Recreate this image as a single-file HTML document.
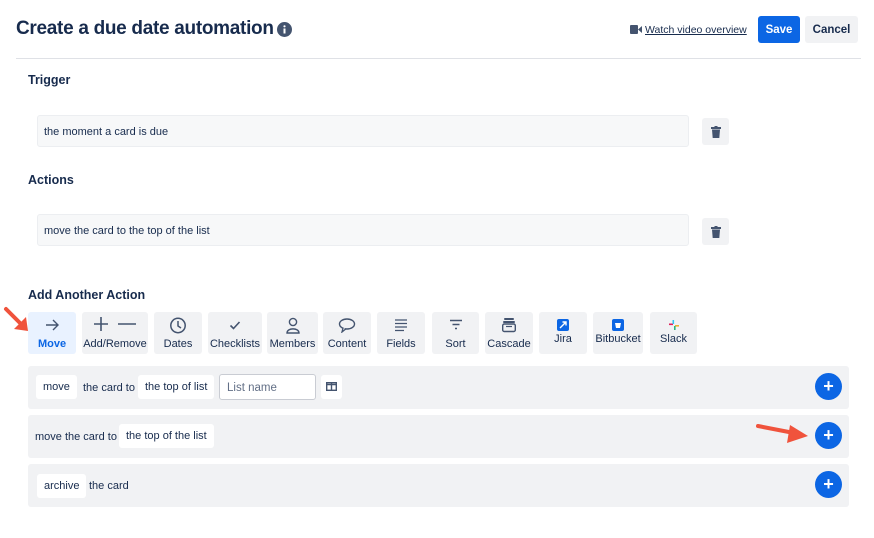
<!DOCTYPE html>
<html><head><meta charset="utf-8"><style>
*{box-sizing:border-box;margin:0;padding:0}
body{width:874px;height:538px;background:#fff;font-family:"Liberation Sans",sans-serif;color:#172b4d;position:relative;overflow:hidden}
.a{position:absolute}
h1{position:absolute;left:16px;top:18px;font-size:19px;font-weight:bold;color:#172b4d;letter-spacing:-0.3px;white-space:nowrap}
.h{font-size:12.5px;font-weight:bold}
.box{background:#f7f8f9;border:1px solid #eceef1;border-radius:3px;font-size:11px;padding-left:6px;padding-top:1px;display:flex;align-items:center}
.trash{background:#f1f2f4;border-radius:3px;display:flex;align-items:center;justify-content:center}
.btn{position:absolute;top:312px;height:42px;background:#f1f2f4;border-radius:3px;font-size:11px;color:#172b4d;text-align:center;white-space:nowrap}
.btn svg{position:absolute;left:50%;top:5px;transform:translateX(-50%)}
.btn span{position:absolute;left:0;right:0;top:26px}
.row{position:absolute;left:28px;width:821px;height:43px;background:#f1f2f4;border-radius:3px}
.chip{position:absolute;background:#fff;border-radius:3px;font-size:11px;height:24px;line-height:25px;padding:0 7px;white-space:nowrap}
.t{position:absolute;font-size:11px;white-space:nowrap}
.plus{position:absolute;left:787px;width:27px;height:27px;border-radius:50%;background:#0c66e4;color:#fff;font-weight:bold;font-size:18px;line-height:26px;text-align:center}
</style></head><body>
<h1>Create a due date automation</h1>
<svg class="a" style="left:277px;top:22px" width="15" height="15"><circle cx="7.5" cy="7.5" r="7.5" fill="#44546f"/><rect x="6.5" y="6.5" width="2" height="5" fill="#fff"/><circle cx="7.5" cy="4.3" r="1.1" fill="#fff"/></svg>
<svg class="a" style="left:630px;top:25px" width="12" height="9"><rect x="0" y="0" width="8" height="9" rx="1" fill="#44546f"/><path d="M8 4.5 L12 1 V8 Z" fill="#44546f"/></svg>
<div class="a" style="left:645px;top:24px;font-size:10.5px;text-decoration:underline;color:#172b4d">Watch video overview</div>
<div class="a" style="left:758px;top:16px;width:42px;height:27px;background:#0c66e4;border-radius:3px;color:#fff;font-weight:bold;font-size:11.5px;line-height:28px;text-align:center">Save</div>
<div class="a" style="left:805px;top:16px;width:53px;height:27px;background:#f1f2f4;border-radius:3px;font-weight:bold;font-size:11.5px;line-height:28px;text-align:center">Cancel</div>
<div class="a" style="left:16px;top:58px;width:845px;height:1px;background:#dfe1e6"></div>

<div class="a h" style="left:28px;top:73px">Trigger</div>
<div class="a box" style="left:37px;top:115px;width:652px;height:32px">the moment a card is due</div>
<div class="a trash" style="left:702px;top:118px;width:27px;height:27px"><svg width="10" height="12"><rect x="0" y="1" width="10" height="2" fill="#44546f"/><rect x="3.5" y="0" width="3" height="1.5" fill="#44546f"/><path d="M1 3.5 H9 L8.3 12 H1.7 Z" fill="#44546f"/></svg></div>

<div class="a h" style="left:28px;top:173px">Actions</div>
<div class="a box" style="left:37px;top:214px;width:652px;height:32px">move the card to the top of the list</div>
<div class="a trash" style="left:702px;top:218px;width:27px;height:27px"><svg width="10" height="12"><rect x="0" y="1" width="10" height="2" fill="#44546f"/><rect x="3.5" y="0" width="3" height="1.5" fill="#44546f"/><path d="M1 3.5 H9 L8.3 12 H1.7 Z" fill="#44546f"/></svg></div>

<div class="a h" style="left:28px;top:288px">Add Another Action</div>

<div class="btn" style="left:28px;width:48px;background:#e9f2ff;color:#0c66e4"><svg width="16" height="16"><path d="M2 8 H14 M9 3 L14 8 L9 13" stroke="#44546f" stroke-width="1.4" fill="none"/></svg><span style="font-weight:bold">Move</span></div>
<div class="btn" style="left:82px;width:66px"><svg width="46" height="16" style="top:4px"><path d="M2 8 H16 M9 1 V15 M26 8 H44" stroke="#44546f" stroke-width="1.6"/></svg><span>Add/Remove</span></div>
<div class="btn" style="left:154px;width:48px"><svg width="17" height="17"><circle cx="8.5" cy="8.5" r="7.2" stroke="#44546f" stroke-width="1.5" fill="none"/><path d="M8.5 4 V9 L11.5 11" stroke="#44546f" stroke-width="1.5" fill="none"/></svg><span>Dates</span></div>
<div class="btn" style="left:208px;width:54px"><svg width="14" height="16"><path d="M2.5 8.5 L5.5 11.5 L11.5 5" stroke="#44546f" stroke-width="1.6" fill="none"/></svg><span>Checklists</span></div>
<div class="btn" style="left:267px;width:51px"><svg width="16" height="17"><circle cx="8" cy="5" r="3.6" stroke="#44546f" stroke-width="1.4" fill="none"/><path d="M2 16 C2 10.5 14 10.5 14 16 Z" stroke="#44546f" stroke-width="1.4" fill="none"/></svg><span>Members</span></div>
<div class="btn" style="left:323px;width:48px"><svg width="18" height="16"><ellipse cx="9" cy="7" rx="7.5" ry="5" stroke="#44546f" stroke-width="1.4" fill="none"/><path d="M5 11 L4 15 L8 11.8" stroke="#44546f" stroke-width="1.3" fill="#f1f2f4"/></svg><span>Content</span></div>
<div class="btn" style="left:377px;width:48px"><svg width="16" height="16"><path d="M2 3 H14 M2 6.5 H14 M2 10 H14 M2 13.5 H11" stroke="#44546f" stroke-width="1.3"/></svg><span>Fields</span></div>
<div class="btn" style="left:432px;width:47px"><svg width="16" height="16"><path d="M2 3.5 H14 M4.5 7.5 H11.5 M7 11.5 H9" stroke="#44546f" stroke-width="1.5"/></svg><span>Sort</span></div>
<div class="btn" style="left:485px;width:48px"><svg width="16" height="16"><rect x="3" y="1" width="10" height="2" rx="1" fill="#44546f"/><rect x="2" y="4" width="12" height="2" rx="1" fill="#44546f"/><rect x="1.7" y="7" width="12.6" height="7.5" rx="1.5" stroke="#44546f" stroke-width="1.4" fill="none"/><path d="M5 9.5 H11" stroke="#44546f" stroke-width="1.2"/></svg><span>Cascade</span></div>
<div class="btn" style="left:539px;width:48px"><svg width="12" height="12" style="top:7px"><rect width="12" height="12" rx="2" fill="#0c66e4"/><path d="M3 9 L9 3 M5.5 3 H9 V6.5" stroke="#fff" stroke-width="1.4" fill="none"/></svg><span style="top:21px">Jira</span></div>
<div class="btn" style="left:593px;width:50px"><svg width="12" height="12" style="top:7px"><rect width="12" height="12" rx="2" fill="#0c66e4"/><path d="M3 4 H9 L8 9 H4 Z" fill="#fff"/></svg><span style="top:21px">Bitbucket</span></div>
<div class="btn" style="left:650px;width:47px"><svg width="10" height="10" style="top:8px"><rect x="0" y="3.5" width="4" height="1.6" fill="#e01e5a"/><rect x="3.5" y="0" width="1.6" height="4" fill="#36c5f0"/><rect x="6" y="5" width="4" height="1.6" fill="#ecb22e"/><rect x="5" y="6" width="1.6" height="4" fill="#2eb67d"/></svg><span style="top:21px">Slack</span></div>

<div class="row" style="top:366px">
 <div class="chip" style="left:8px;top:9px">move</div>
 <div class="t" style="left:55px;top:16px">the card to</div>
 <div class="chip" style="left:110px;top:9px">the top of list</div>
 <div class="a" style="left:191px;top:8px;width:97px;height:26px;background:#fff;border:1px solid #c9ccd3;border-radius:3px;font-size:11.5px;color:#626f86;padding:7px 7px">List name</div>
 <div class="a" style="left:293px;top:9px;width:21px;height:24px;background:#fff;border-radius:3px"><svg width="11" height="9" style="position:absolute;left:5px;top:7px"><rect x="0.7" y="0.7" width="9.6" height="7.6" stroke="#44546f" stroke-width="1.4" fill="none"/><path d="M5.5 1 V8 M1 2.5 H10" stroke="#44546f" stroke-width="1.4"/></svg></div>
 <div class="plus" style="top:7px">+</div>
</div>
<div class="row" style="top:415px">
 <div class="t" style="left:7px;top:16px">move the card to</div>
 <div class="chip" style="left:91px;top:9px">the top of the list</div>
 <div class="plus" style="top:7px">+</div>
</div>
<div class="row" style="top:464px">
 <div class="chip" style="left:9px;top:10px">archive</div>
 <div class="t" style="left:61px;top:16px">the card</div>
 <div class="plus" style="top:7px">+</div>
</div>

<svg class="a" style="left:0;top:300px" width="40" height="40"><path d="M6 9 L22 25" stroke="#f0533c" stroke-width="4" stroke-linecap="round"/><path d="M28 31 L14 29 L26 17 Z" fill="#f0533c"/></svg>
<svg class="a" style="left:750px;top:415px" width="65" height="35"><path d="M8 11 L44 18" stroke="#f0533c" stroke-width="4" stroke-linecap="round"/><path d="M58 21 L40 10 L37 28 Z" fill="#f0533c"/></svg>
</body></html>
